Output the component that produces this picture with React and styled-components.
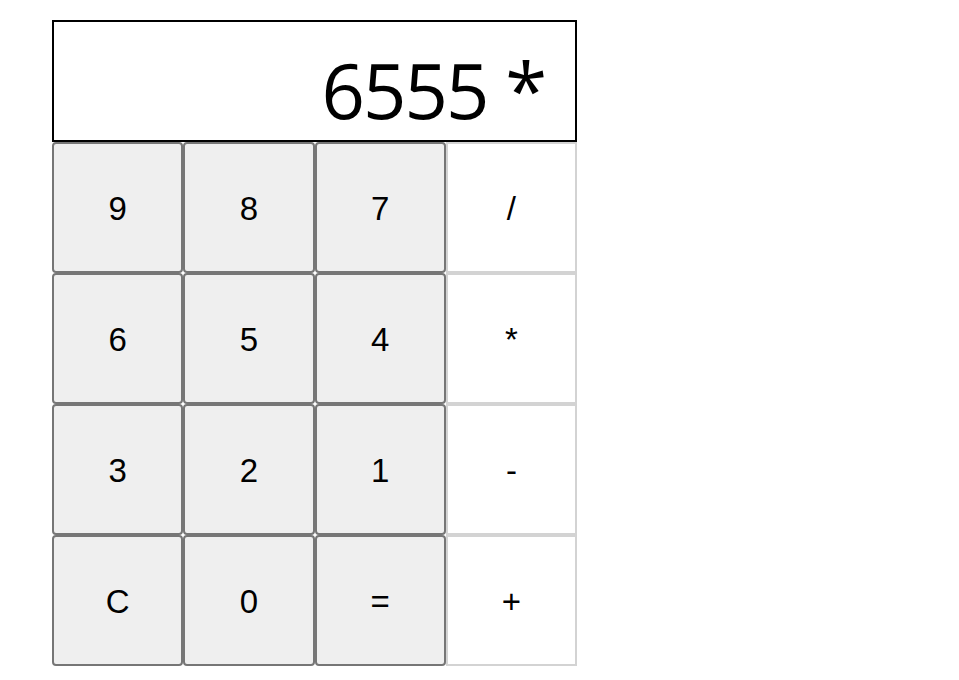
import React, { useState } from 'react';
import styled, { createGlobalStyle } from 'styled-components';

const GlobalStyle = createGlobalStyle`
  body {
    margin: 0;
    background: #fff;
  }
`;

const Wrapper = styled.div`
  width: 525px;
  margin: 20px 0 0 52px;
`;

const Display = styled.div`
  box-sizing: border-box;
  height: 122px;
  border: 2px solid #000;
  padding: 0 30px 12px 0;
  display: flex;
  align-items: flex-end;
  justify-content: flex-end;
  font-family: 'Open Sans', 'Noto Sans', sans-serif;
  font-size: 76px;
  line-height: 1;
  letter-spacing: -2px;
  color: #000;
  white-space: pre;
`;

const Keypad = styled.div`
  display: grid;
  grid-template-columns: repeat(4, 1fr);
  grid-auto-rows: 131px;
`;

const Key = styled.button`
  box-sizing: border-box;
  margin: 0;
  padding: 2px 0 0;
  font-family: 'Liberation Sans', Arial, sans-serif;
  font-size: 33px;
  color: #000;
  cursor: pointer;
  background: ${p => (p.$op ? '#fff' : '#efefef')};
  border: 2px solid ${p => (p.$op ? '#d3d3d3' : '#767676')};
  border-radius: ${p => (p.$op ? '0' : '4px')};
`;

const keys = [
  ['9', '8', '7', '/'],
  ['6', '5', '4', '*'],
  ['3', '2', '1', '-'],
  ['C', '0', '=', '+'],
];

const ops = ['/', '*', '-', '+'];

export default function App() {
  const [value, setValue] = useState('6555 *');

  const press = k => {
    if (k === 'C') return setValue('');
    if (k === '=') {
      try {
        // eslint-disable-next-line no-new-func
        setValue(String(Function(`return (${value})`)()));
      } catch (e) {
        setValue('');
      }
      return;
    }
    if (ops.includes(k)) return setValue(v => `${v} ${k} `.replace(/\s+/g, ' '));
    setValue(v => v + k);
  };

  return (
    <>
      <GlobalStyle />
      <Wrapper>
        <Display>{value}</Display>
        <Keypad>
          {keys.flat().map(k => (
            <Key key={k} $op={ops.includes(k)} onClick={() => press(k)}>
              {k}
            </Key>
          ))}
        </Keypad>
      </Wrapper>
    </>
  );
}
